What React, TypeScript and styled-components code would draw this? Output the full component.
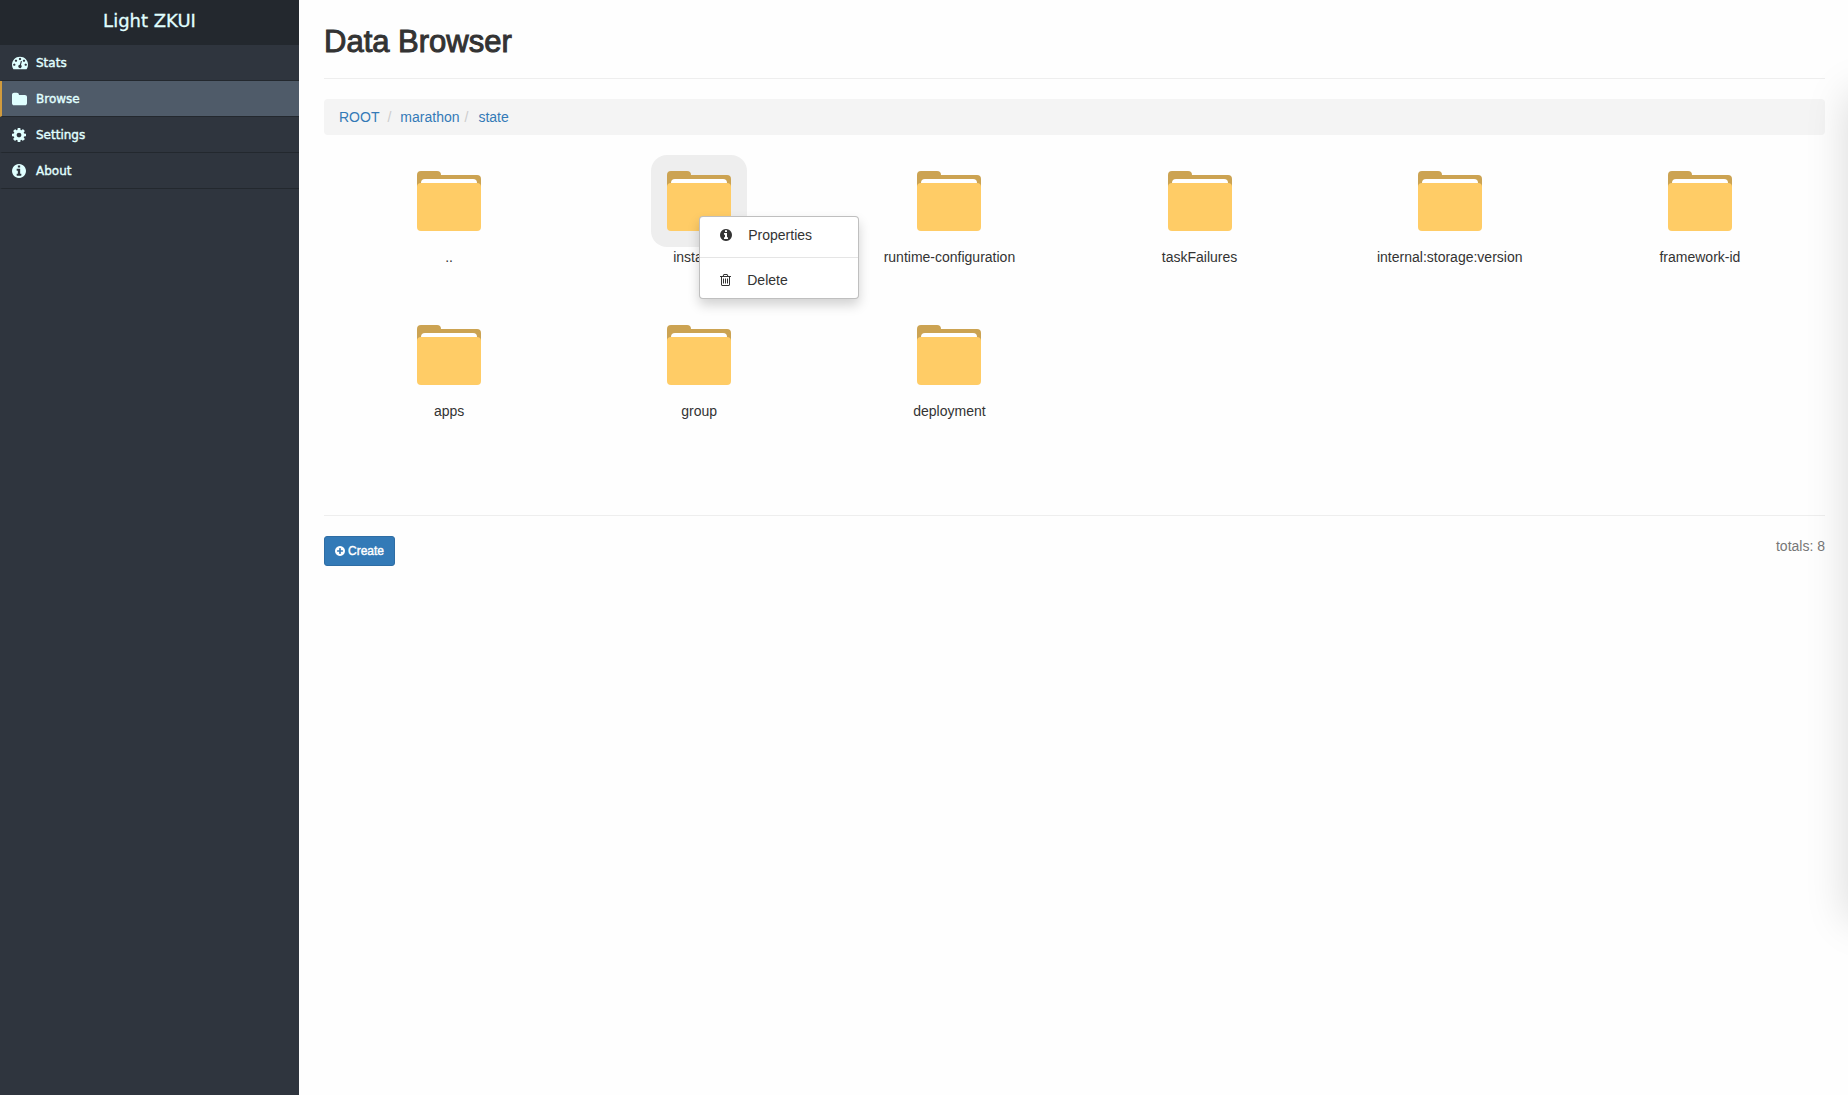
import React from "react";
import styled, { createGlobalStyle, css } from "styled-components";

const Global = createGlobalStyle`
  *, *::before, *::after { box-sizing: border-box; }
  body {
    margin: 0;
    background: #fefefe;
    color: #333;
    font: 14px/20px "Helvetica Neue", Helvetica, "Liberation Sans", Arial, sans-serif;
  }
  a { text-decoration: none; }
`;

const Page = styled.div`
  position: relative;
  display: grid;
  grid-template-columns: 299px 1fr;
  min-height: 100vh;
  overflow: hidden;
`;

const Sidebar = styled.aside`
  background: #2f353e;
  color: #e0ffff;
  font-family: Verdana, "DejaVu Sans", sans-serif;
`;

const Brand = styled.div`
  padding: 9px 0 12px;
  background: #23282e;
  font-size: 18px;
  line-height: 24px;
  text-align: center;
  -webkit-text-stroke: 0.3px #e0ffff;
`;

const NavLink = styled.a<{ $active?: boolean }>`
  display: flex;
  align-items: center;
  height: 36px;
  padding-left: 10px;
  border-left: 2px solid transparent;
  border-bottom: 1px solid #23282e;
  color: #e0ffff;
  font-size: 12px;
  -webkit-text-stroke: 0.4px #e0ffff;
  ${(p) => p.$active && css`
    border-left-color: #d19b3d;
    background: #4f5b69;
  `}
`;

const NavIcon = styled.span`
  display: flex;
  width: 24px;
`;

const Main = styled.main`
  padding: 0 23px 0 25px;
`;

const Title = styled.h2`
  margin: 0 0 20px;
  padding: 25px 0 20px;
  border-bottom: 1px solid #eee;
  font-size: 31px;
  line-height: 33px;
  font-weight: 500;
  -webkit-text-stroke: 1px #333;
`;

const Breadcrumb = styled.ol`
  display: flex;
  margin: 0 0 20px;
  padding: 8px 15px;
  border-radius: 4px;
  background: #f4f4f4;
  list-style: none;
`;

const Crumb = styled.li`
  a { color: #337ab7; }
  & + li::before {
    content: "/";
    padding: 0 9px 0 8px;
    color: #ccc;
  }
  & + li:last-child::before {
    padding: 0 10px 0 5px;
  }
`;

const Grid = styled.div`
  display: grid;
  grid-template-columns: repeat(6, 1fr);
  min-height: 361px;
  align-content: start;
  border-bottom: 1px solid #eee;
`;

const Cell = styled.div`
  position: relative;
  display: flex;
  flex-direction: column;
  align-items: center;
  height: 154px;
`;

const FolderButton = styled.button<{ $selected?: boolean }>`
  display: block;
  padding: 16px;
  border: 0;
  border-radius: 16px;
  background: ${(p) => (p.$selected ? "#eee" : "transparent")};
  svg { display: block; }
`;

const Menu = styled.div`
  position: absolute;
  z-index: 2;
  top: 61px;
  left: 50%;
  width: 160px;
  padding: 5px 0;
  border: 1px solid rgba(0, 0, 0, 0.25);
  border-radius: 4px;
  background: #fff;
  box-shadow: 0 6px 12px rgba(0, 0, 0, 0.175);
`;

const MenuItem = styled.button`
  display: flex;
  align-items: center;
  gap: 16px;
  width: 100%;
  padding: 3px 20px;
  border: 0;
  background: none;
  color: #333;
  font: inherit;
`;

const Divider = styled.hr`
  height: 1px;
  margin: 9px 0;
  border: 0;
  background: #e5e5e5;
`;

const Footer = styled.footer`
  display: flex;
  justify-content: space-between;
  align-items: flex-start;
  padding: 20px 0;
`;

const CreateButton = styled.button`
  display: flex;
  align-items: center;
  gap: 3px;
  height: 30px;
  padding: 0 10px;
  border: 1px solid #2e6da4;
  border-radius: 3px;
  background: #337ab7;
  color: #fff;
  font: 12px/18px "Liberation Sans", Arial, sans-serif;
  -webkit-text-stroke: 0.4px #fff;
`;

const Totals = styled.span`
  color: #777;
`;

const EdgeShade = styled.div`
  position: absolute;
  z-index: 3;
  top: 94px;
  left: 100%;
  width: 300px;
  height: 826px;
  box-shadow: 0 0 40px rgba(0, 0, 0, 0.15);
  pointer-events: none;
`;

const glyphs = {
  dashboard: {
    box: "0 128 1792 1536",
    d: "M384 896q0-53-37.5-90.5t-90.5-37.5-90.5 37.5-37.5 90.5 37.5 90.5 90.5 37.5 90.5-37.5 37.5-90.5zm192-448q0-53-37.5-90.5t-90.5-37.5-90.5 37.5-37.5 90.5 37.5 90.5 90.5 37.5 90.5-37.5 37.5-90.5zm428 481l101-382q6-26-7.5-48.5t-38.5-29.5-48 6.5-30 39.5l-101 382q-60 5-107 43.5t-63 98.5q-20 77 20 146t117 89 146-20 89-117q16-60-6-117t-72-91zm660-33q0-53-37.5-90.5t-90.5-37.5-90.5 37.5-37.5 90.5 37.5 90.5 90.5 37.5 90.5-37.5 37.5-90.5zm-640-640q0-53-37.5-90.5t-90.5-37.5-90.5 37.5-37.5 90.5 37.5 90.5 90.5 37.5 90.5-37.5 37.5-90.5zm448 192q0-53-37.5-90.5t-90.5-37.5-90.5 37.5-37.5 90.5 37.5 90.5 90.5 37.5 90.5-37.5 37.5-90.5zm320 448q0 261-141 483-19 29-54 29h-1402q-35 0-54-29-141-221-141-483 0-182 71-348t191-286 286-191 348-71 348 71 286 191 191 286 71 348z",
    shift: "translate(0 192)",
  },
  folder: {
    box: "64 128 1664 1536",
    d: "M1728 608v704q0 92-66 158t-158 66h-1216q-92 0-158-66t-66-158v-960q0-92 66-158t158-66h320q92 0 158 66t66 158v32h672q92 0 158 66t66 158z",
    shift: "translate(0 64)",
  },
  cog: {
    box: "128 128 1536 1536",
    d: "M1152 896q0-106-75-181t-181-75-181 75-75 181 75 181 181 75 181-75 75-181zm512-109v222q0 12-8 23t-20 13l-185 28q-19 54-39 91 35 50 107 138 10 12 10 25t-9 23q-27 37-99 108t-94 71q-12 0-26-9l-138-108q-44 23-91 38-16 136-29 186-7 28-36 28h-222q-14 0-24.5-8.5t-11.5-21.5l-28-184q-49-16-90-37l-141 107q-10 9-25 9-14 0-25-11-126-114-165-168-7-10-7-23 0-12 8-23 15-21 51-66.5t54-70.5q-27-50-41-99l-183-27q-13-2-21-12.5t-8-23.5v-222q0-12 8-23t19-13l186-28q14-46 39-92-40-57-107-138-10-12-10-24 0-10 9-23 26-36 98.5-107.5t94.5-71.5q13 0 26 10l138 107q44-23 91-38 16-136 29-186 7-28 36-28h222q14 0 24.5 8.5t11.5 21.5l28 184q49 16 90 37l142-107q9-9 24-9 13 0 25 10 129 119 165 170 7 8 7 22 0 12-8 23-15 21-51 66.5t-54 70.5q26 50 41 98l183 28q13 2 21 12.5t8 23.5z",
  },
  info: {
    box: "128 128 1536 1536",
    d: "M1152 1376v-160q0-14-9-23t-23-9h-96v-512q0-14-9-23t-23-9h-320q-14 0-23 9t-9 23v160q0 14 9 23t23 9h96v320h-96q-14 0-23 9t-9 23v160q0 14 9 23t23 9h448q14 0 23-9t9-23zm-128-896v-160q0-14-9-23t-23-9h-192q-14 0-23 9t-9 23v160q0 14 9 23t23 9h192q14 0 23-9t9-23zm640 416q0 209-103 385.5t-279.5 279.5-385.5 103-385.5-103-279.5-279.5-103-385.5 103-385.5 279.5-279.5 385.5-103 385.5 103 279.5 279.5 103 385.5z",
  },
  plus: {
    box: "128 128 1536 1536",
    d: "M1344 960v-128q0-26-19-45t-45-19h-256v-256q0-26-19-45t-45-19h-128q-26 0-45 19t-19 45v256h-256q-26 0-45 19t-19 45v128q0 26 19 45t45 19h256v256q0 26 19 45t45 19h128q26 0 45-19t19-45v-256h256q26 0 45-19t19-45zm320-64q0 209-103 385.5t-279.5 279.5-385.5 103-385.5-103-279.5-279.5-103-385.5 103-385.5 279.5-279.5 385.5-103 385.5 103 279.5 279.5 103 385.5z",
  },
  trash: {
    box: "192 128 1408 1536",
    d: "M704 736v576q0 14-9 23t-23 9h-64q-14 0-23-9t-9-23v-576q0-14 9-23t23-9h64q14 0 23 9t9 23zm256 0v576q0 14-9 23t-23 9h-64q-14 0-23-9t-9-23v-576q0-14 9-23t23-9h64q14 0 23 9t9 23zm256 0v576q0 14-9 23t-23 9h-64q-14 0-23-9t-9-23v-576q0-14 9-23t23-9h64q14 0 23 9t9 23zm128 724v-948h-896v948q0 22 7 40.5t14.5 27 10.5 8.5h832q3 0 10.5-8.5t14.5-27 7-40.5zm-672-1076h448l-48-117q-7-9-17-11h-317q-10 2-17 11zm928 32v64q0 14-9 23t-23 9h-96v948q0 83-47 143.5t-113 60.5h-832q-66 0-113-58.5t-47-141.5v-952h-96q-14 0-23-9t-9-23v-64q0-14 9-23t23-9h309l70-167q15-37 54-63t79-26h320q40 0 79 26t54 63l70 167h309q14 0 23 9t9 23z",
  },
};

type GlyphName = keyof typeof glyphs;

const Glyph = ({ name, width, height }: { name: GlyphName; width: number; height: number }) => {
  const g: { box: string; d: string; shift?: string } = glyphs[name];
  return (
    <svg width={width} height={height} viewBox={g.box} fill="currentColor" aria-hidden="true">
      <path d={g.d} transform={g.shift} />
    </svg>
  );
};

const FolderArt = () => (
  <svg width="64" height="60" viewBox="0 0 64 60" aria-hidden="true">
    <path d="M0 16V4a4 4 0 0 1 4-4h16a4 4 0 0 1 4 4h36a4 4 0 0 1 4 4v8z" fill="#cca352" />
    <path d="M4 16v-4a4 4 0 0 1 4-4h48a4 4 0 0 1 4 4v4z" fill="#fff" />
    <rect y="12" width="64" height="48" rx="4" fill="#ffcc66" />
  </svg>
);

const links: { name: string; icon: GlyphName; width: number }[] = [
  { name: "Stats", icon: "dashboard", width: 16 },
  { name: "Browse", icon: "folder", width: 15 },
  { name: "Settings", icon: "cog", width: 14 },
  { name: "About", icon: "info", width: 14 },
];

const folders = [
  "..", "instance", "runtime-configuration", "taskFailures",
  "internal:storage:version", "framework-id", "apps", "group", "deployment",
];

export default function App() {
  return (
    <Page>
      <Global />
      <Sidebar>
        <Brand>Light ZKUI</Brand>
        <nav>
          {links.map((l) => (
            <NavLink key={l.name} href="#" $active={l.name === "Browse"}>
              <NavIcon><Glyph name={l.icon} width={l.width} height={14} /></NavIcon>
              {l.name}
            </NavLink>
          ))}
        </nav>
      </Sidebar>
      <Main>
        <Title>Data Browser</Title>
        <Breadcrumb>
          <Crumb><a href="#">ROOT</a></Crumb>
          <Crumb><a href="#">marathon</a></Crumb>
          <Crumb><a href="#">state</a></Crumb>
        </Breadcrumb>
        <Grid>
          {folders.map((name) => (
            <Cell key={name}>
              <FolderButton aria-label={name} $selected={name === "instance"}>
                <FolderArt />
              </FolderButton>
              <span>{name}</span>
              {name === "instance" && (
                <Menu>
                  <MenuItem><Glyph name="info" width={12} height={12} />Properties</MenuItem>
                  <Divider />
                  <MenuItem><Glyph name="trash" width={11} height={12} />Delete</MenuItem>
                </Menu>
              )}
            </Cell>
          ))}
        </Grid>
        <Footer>
          <CreateButton><Glyph name="plus" width={10} height={10} />Create</CreateButton>
          <Totals>totals: 8</Totals>
        </Footer>
      </Main>
      <EdgeShade />
    </Page>
  );
}
